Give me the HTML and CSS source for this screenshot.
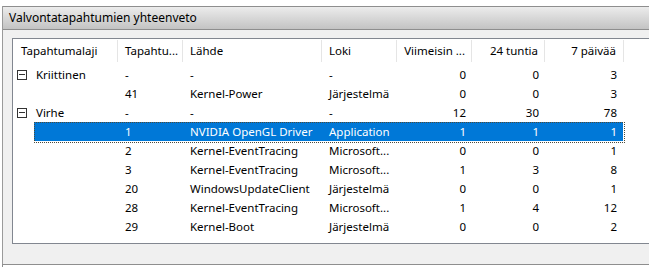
FILE: index.html
```html
<!DOCTYPE html>
<html lang="fi">
    <head>
        <meta charset="utf-8"/>
        <title>Valvontatapahtumien yhteenveto</title>
        <link rel="stylesheet" href="styles.css">
    </head>
    <body>
        <div class="summary">
            <div class="summary-head">Valvontatapahtumien yhteenveto</div>

            <div class="summary-body">
                <div class="list">
                    <div class="row head">
                        <div class="cell first">Tapahtumalaji</div>
                        <div class="cell">Tapahtu...</div>
                        <div class="cell">Lähde</div>
                        <div class="cell">Loki</div>
                        <div class="cell num">Viimeisin ...</div>
                        <div class="cell num">24 tuntia</div>
                        <div class="cell num last">7 päivää</div>
                    </div>

                    <div class="row group">
                        <div class="cell first"><span class="toggle"></span>Kriittinen</div>
                        <div class="cell">-</div>
                        <div class="cell">-</div>
                        <div class="cell">-</div>
                        <div class="cell num">0</div>
                        <div class="cell num">0</div>
                        <div class="cell num last">3</div>
                    </div>
                    <div class="row">
                        <div class="cell first"></div>
                        <div class="cell">41</div>
                        <div class="cell">Kernel-Power</div>
                        <div class="cell">Järjestelmä</div>
                        <div class="cell num">0</div>
                        <div class="cell num">0</div>
                        <div class="cell num last">3</div>
                    </div>

                    <div class="row group">
                        <div class="cell first"><span class="toggle"></span>Virhe</div>
                        <div class="cell">-</div>
                        <div class="cell">-</div>
                        <div class="cell">-</div>
                        <div class="cell num">12</div>
                        <div class="cell num">30</div>
                        <div class="cell num last">78</div>
                    </div>
                    <div class="row selected">
                        <div class="cell first"></div>
                        <div class="cell">1</div>
                        <div class="cell">NVIDIA OpenGL Driver</div>
                        <div class="cell">Application</div>
                        <div class="cell num">1</div>
                        <div class="cell num">1</div>
                        <div class="cell num last">1</div>
                    </div>
                    <div class="row">
                        <div class="cell first"></div>
                        <div class="cell">2</div>
                        <div class="cell">Kernel-EventTracing</div>
                        <div class="cell">Microsoft...</div>
                        <div class="cell num">0</div>
                        <div class="cell num">0</div>
                        <div class="cell num last">1</div>
                    </div>
                    <div class="row">
                        <div class="cell first"></div>
                        <div class="cell">3</div>
                        <div class="cell">Kernel-EventTracing</div>
                        <div class="cell">Microsoft...</div>
                        <div class="cell num">1</div>
                        <div class="cell num">3</div>
                        <div class="cell num last">8</div>
                    </div>
                    <div class="row">
                        <div class="cell first"></div>
                        <div class="cell">20</div>
                        <div class="cell">WindowsUpdateClient</div>
                        <div class="cell">Järjestelmä</div>
                        <div class="cell num">0</div>
                        <div class="cell num">0</div>
                        <div class="cell num last">1</div>
                    </div>
                    <div class="row">
                        <div class="cell first"></div>
                        <div class="cell">28</div>
                        <div class="cell">Kernel-EventTracing</div>
                        <div class="cell">Microsoft...</div>
                        <div class="cell num">1</div>
                        <div class="cell num">4</div>
                        <div class="cell num last">12</div>
                    </div>
                    <div class="row">
                        <div class="cell first"></div>
                        <div class="cell">29</div>
                        <div class="cell">Kernel-Boot</div>
                        <div class="cell">Järjestelmä</div>
                        <div class="cell num">0</div>
                        <div class="cell num">0</div>
                        <div class="cell num last">2</div>
                    </div>
                </div>
            </div>
        </div>

        <div class="next-panel"></div>
    </body>
</html>
```

FILE: styles.css
```css
*{margin:0;padding:0;box-sizing:border-box;}

html, body{
    overflow: hidden;
}

body{
    background: white;
    font-family: "Noto Sans", "Open Sans", sans-serif;
    font-size: 11.5px;
    color: #000;
    width: 649px;
    height: 267px;
}

.summary{
    width: 647px;
    margin: 6px 0 0 2px;
    border-left: 1px solid #9a9a9a;
}

.summary-head{
    height: 24px;
    padding-left: 6px;
    font-size: 12px;
    line-height: 22px;
    border-top: 1px solid #8e8e8e;
    border-bottom: 1px solid #8e8e8e;
    background: linear-gradient(#ececec, #c3c3c3);
}

.summary-body{
    background: #f0f0f0;
    padding: 8px 0 20px 9px;
}

.list{
    height: 206px;
    background: white;
    border: 1px solid #828790;
    border-right: none;
    overflow: hidden;
}

.row{
    display: grid;
    grid-template-columns: 105px 65px 139px 75px 75px 73px 79px;
    height: 19px;
    line-height: 19px;
    white-space: nowrap;
}

.row.head{
    height: 26px;
    line-height: 24px;
}

.row.head .cell{
    border-right: 1px solid #e5e5e5;
    margin: 1px 0 3px;
    line-height: 22px;
}

.cell{
    padding: 0 6px 0 7px;
    overflow: hidden;
}

.cell.first{
    padding-left: 8px;
}

.group .cell.first{
    display: flex;
    align-items: center;
    padding-left: 4px;
}

.cell.num{
    padding-left: 2px;
    text-align: right;
}

.cell.last{
    padding-right: 7px;
}

.toggle{
    position: relative;
    width: 10px;
    height: 10px;
    border: 1px solid #333;
    margin-right: 9px;
}

.toggle::after{
    content: "";
    position: absolute;
    left: 1px;
    top: 3px;
    width: 6px;
    height: 1px;
    background: #333;
}

.row.selected{
    background: linear-gradient(90deg, transparent 21px, #0078d7 21px, #0078d7 610px, transparent 610px);
    color: white;
    position: relative;
}

.row.selected::before{
    content: "";
    position: absolute;
    left: 21px;
    top: 0;
    width: 589px;
    height: 19px;
    border: 1px dotted #4a4a3a;
}

.next-panel{
    margin-left: 2px;
    height: 3px;
    border-top: 1px solid #8e8e8e;
    border-left: 1px solid #8e8e8e;
}
```
